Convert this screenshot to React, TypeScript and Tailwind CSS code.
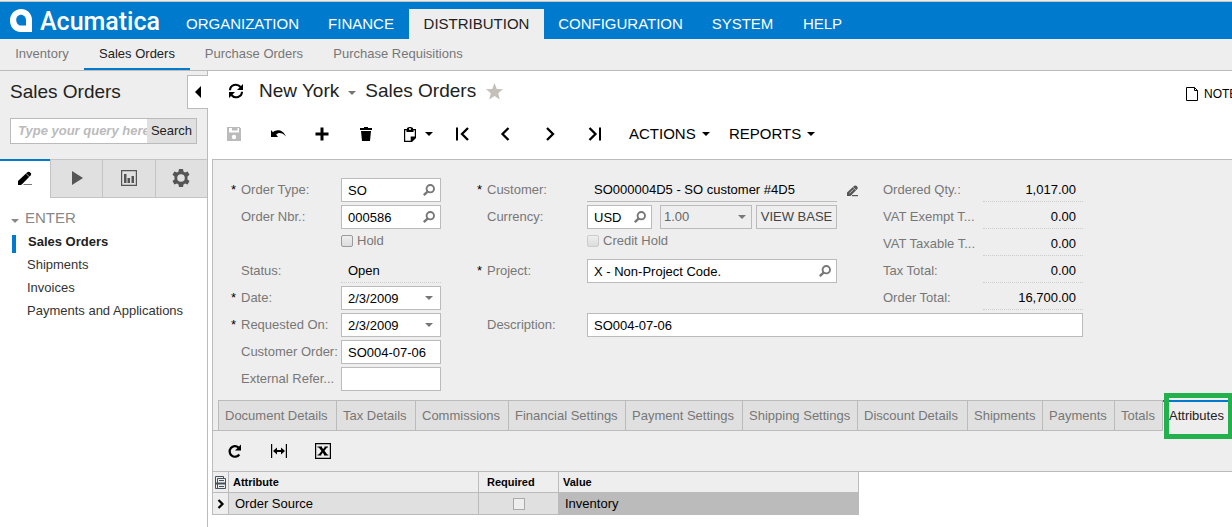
import React from "react";

type IconProps = { className?: string };

const Svg = ({ size = 16, className = "", children }: { size?: number; className?: string; children: React.ReactNode }) => (
  <svg width={size} height={size} viewBox={`0 0 ${size} ${size}`} fill="currentColor" className={`shrink-0 ${className}`} aria-hidden="true">
    {children}
  </svg>
);

const Caret = ({ className = "" }: IconProps) => (
  <svg width="8" height="4" viewBox="0 0 8 4" fill="currentColor" className={`shrink-0 ${className}`} aria-hidden="true">
    <path d="M0 0h8L4 4z" />
  </svg>
);

const Magnifier = () => (
  <svg width="12" height="12" viewBox="0 0 12 12" fill="none" stroke="currentColor" className="shrink-0" aria-hidden="true">
    <circle cx="7.3" cy="4.7" r="3.700" strokeWidth="1.900" />
    <path d="M4.800 7.400.8 11.200" strokeWidth="2.300" />
  </svg>
);

const Pencil = ({ className = "" }: IconProps) => (
  <Svg className={className}>
    <path d="M1 15v-4L10.3 2.2q1.4-1.1 2.7.1l.8.9q.8 1.1-.2 2.3L5 14.2 4 15z" />
    <path d="M9 3.4 12.6 7" stroke="white" strokeWidth=".7" />
    <path d="M7 14.2h8v.9H6z" opacity=".7" />
  </Svg>
);

const Sync = () => (
  <Svg>
    <g fill="none" stroke="currentColor" strokeWidth="2.1">
      <path d="M2 7.2C2.2 1.8 9-.2 12.6 4M14 8.8C13.8 14.2 7 16.2 3.4 12" />
    </g>
    <path d="M15 1v6H9zM1 15V9h6z" />
  </Svg>
);

const navItems = [
  { label: "ORGANIZATION", width: "w-[141px]" },
  { label: "FINANCE", width: "w-24" },
  { label: "DISTRIBUTION", width: "w-[135px]" },
  { label: "CONFIGURATION", width: "w-[153px]" },
  { label: "SYSTEM", width: "w-[91px]" },
  { label: "HELP", width: "w-[69px]" },
];

const subItems = [
  { label: "Inventory", width: "w-[84px]" },
  { label: "Sales Orders", width: "w-[106px]" },
  { label: "Purchase Orders", width: "w-32" },
  { label: "Purchase Requisitions", width: "w-40" },
];

const detailTabs = [
  { label: "Document Details", width: "w-[118px]" },
  { label: "Tax Details", width: "w-[79px]" },
  { label: "Commissions", width: "w-[93px]" },
  { label: "Financial Settings", width: "w-[117px]" },
  { label: "Payment Settings", width: "w-[117px]" },
  { label: "Shipping Settings", width: "w-[115px]" },
  { label: "Discount Details", width: "w-[110px]" },
  { label: "Shipments", width: "w-[75px]" },
  { label: "Payments", width: "w-[72px]" },
  { label: "Totals", width: "w-[49px] border-r" },
];

const totals = [
  ["Ordered Qty.:", "1,017.00"],
  ["VAT Exempt T...", "0.00"],
  ["VAT Taxable T...", "0.00"],
  ["Tax Total:", "0.00"],
  ["Order Total:", "16,700.00"],
];

function Header() {
  return (
    <header className="border-t border-[#eeeeee]">
      <div className="flex h-[38px] items-end border-t border-[#c4c4c4] bg-[#007acc]">
        <div className="flex h-full w-[172px] shrink-0 items-center gap-2 pl-[10px] text-white">
          <svg width="22" height="23" viewBox="0 0 22 23" fill="currentColor" aria-hidden="true" className="shrink-0">
            <path fillRule="evenodd" d="M11 0c6 0 11 4.600 11 10.700V23H10.500C4.500 22.600 0 18 0 11.400 0 5 5 0 11 0zM11 5.800c-2.700 0-4.800 2.300-4.800 5.200s2.100 5.600 4.800 5.600h5V11c0-2.900-2.300-5.200-5-5.200z" />
          </svg>
          <span className="pt-[2px] font-[Roboto,sans-serif] text-[25px] leading-6 font-medium">Acumatica</span>
        </div>
        <nav className="flex items-end text-[15px]">
          {navItems.map(({ label, width }) => (
            <a
              key={label}
              href="#"
              className={`flex h-[30px] items-center justify-center ${width} ${label === "DISTRIBUTION" ? "bg-[#eeeeee] text-[#222222]" : "text-white"}`}
            >
              {label}
            </a>
          ))}
        </nav>
      </div>
      <nav className="flex h-8 border-b border-[#bbbbbb] bg-[#eeeeee]">
        {subItems.map(({ label, width }) => (
          <a
            key={label}
            href="#"
            className={`flex items-center justify-center border-b-2 ${width} ${label === "Sales Orders" ? "border-[#007acc] text-[#222222]" : "border-transparent text-[#777777]"}`}
          >
            {label}
          </a>
        ))}
      </nav>
    </header>
  );
}

function Sidebar() {
  const sideTab = "flex h-[39px] flex-1 items-center justify-center border-t border-b border-l border-[#c4c4c4] bg-[#e0e0e0] pb-[2px] text-[#555555]";
  return (
    <aside className="relative w-52 shrink-0 border-r border-[#bbbbbb] bg-white">
      <div className="h-[88px] bg-[#eeeeee] px-[10px] pt-[9px]">
        <h2 className="text-[19px] leading-6 text-[#222222]">Sales Orders</h2>
        <form className="mt-[14px] flex h-[26px] border border-[#bbbbbb] bg-white">
          <input
            aria-label="Search query"
            placeholder="Type your query here"
            className="min-w-0 flex-1 pl-[7px] font-bold italic outline-none placeholder:text-[#bbbbbb]"
          />
          <button type="button" className="w-[49px] bg-[#e0e0e0] text-[#222222]">Search</button>
        </form>
      </div>
      <button
        type="button"
        aria-label="Collapse panel"
        className="absolute top-1 -right-px flex h-[34px] w-[21px] items-center justify-center border border-r-0 border-[#bbbbbb] bg-white text-black"
      >
        <svg width="6" height="12" viewBox="0 0 6 12" fill="currentColor" aria-hidden="true"><path d="M6 0v12L0 6z" /></svg>
      </button>
      <div className="flex">
        <button type="button" aria-label="Enter" className="flex w-[50px] items-center justify-center border-t-2 border-[#007acc] bg-white pb-1 text-black">
          <Pencil />
        </button>
        <button type="button" aria-label="Run" className={sideTab}>
          <Svg><path d="M3 1v14l11-7z" /></Svg>
        </button>
        <button type="button" aria-label="Reports" className={sideTab}>
          <Svg>
            <path fillRule="evenodd" d="M0 0h16v16H0zM1.200 1.200v13.600h13.600V1.200z" />
            <path d="M3 4h2.500v9H3zM6.500 8h2.500v5H6.500zM10.500 6H13v7h-2.500z" />
          </Svg>
        </button>
        <button type="button" aria-label="Settings" className={sideTab}>
          <Svg size={18}>
            <path fillRule="evenodd" d="M7 0h4l.5 2.600 1.500.8 2.600-1 1.900 3.400-2 1.700v2.900l2 1.700-1.900 3.500-2.600-1-1.500.8L11 18H7l-.5-2.600-1.500-.8-2.600 1-1.900-3.500 2-1.700V7.500l-2-1.700L2.400 2.400l2.600 1 1.500-.8zM9 5.200a3.800 3.800 0 1 0 0 7.600 3.800 3.800 0 0 0 0-7.600z" />
          </Svg>
        </button>
      </div>
      <div className="pt-2">
        <h3 className="flex h-6 items-center gap-[6px] pl-[11px] text-[15px] text-[#888888]">
          <Caret className="mt-[6px]" />
          ENTER
        </h3>
        <ul className="text-[#333333]">
          {["Sales Orders", "Shipments", "Invoices", "Payments and Applications"].map((item, i) => (
            <li key={item} className="flex h-[23px] items-center pl-3">
              <span className={`mr-[11px] h-[18px] w-1 shrink-0 self-end ${i === 0 ? "bg-[#007acc]" : ""}`} />
              <a href="#" className={i === 0 ? "pl-px font-bold text-[#222222]" : "whitespace-nowrap"}>{item}</a>
            </li>
          ))}
        </ul>
      </div>
    </aside>
  );
}

function Toolbar() {
  const tool = "flex h-8 w-11 items-center justify-center";
  return (
    <div className="flex h-[50px] items-center text-black">
      <button type="button" aria-label="Save" className={`${tool} text-[#bbbbbb]`}>
        <Svg><path fillRule="evenodd" d="M1 1h12.500L15 2.500V15H1zM3 2v4.500h10V2h-1.500v2.500H6V2zM8 8.800a2.200 2.200 0 1 0 0 4.400 2.200 2.200 0 0 0 0-4.400z" /></Svg>
      </button>
      <button type="button" aria-label="Undo" className={tool}>
        <Svg><path d="M1 4l2 2.200C6.500 3 13 3.500 16 10.500 12.500 6.500 8.500 6 6.200 8.500L8 11H1z" /></Svg>
      </button>
      <button type="button" aria-label="Add" className={tool}>
        <Svg><path d="M6.500 1.500h3v5h5v3h-5v5h-3v-5h-5v-3h5z" /></Svg>
      </button>
      <button type="button" aria-label="Delete" className={tool}>
        <Svg><path d="M2 2h4V1h4v1h4v2H2zM3 5h10l-1 10H4z" /></Svg>
      </button>
      <button type="button" aria-label="Clipboard" className="flex h-8 w-[52px] items-center gap-2 pl-4">
        <svg width="13" height="15" viewBox="0 0 13 15" fill="currentColor" className="shrink-0" aria-hidden="true">
          <path fillRule="evenodd" d="M0 2h3V1l2-1h2l2 1v1h3v9l-4 4H0zM1.200 3.200v10.600h5.500V9.500h4.100V3.200H9.500V5h-7V3.200zM5 1.300v1.500h2V1.300z" />
        </svg>
        <Caret />
      </button>
      <button type="button" aria-label="First record" className={tool}>
        <Svg><path d="M2 1.500h2v13H2z" /><path d="M14 2 8 8l6 6" fill="none" stroke="currentColor" strokeWidth="2.300" /></Svg>
      </button>
      <button type="button" aria-label="Previous record" className={tool}>
        <Svg><path d="M10.500 2 4.500 8l6 6" fill="none" stroke="currentColor" strokeWidth="2.300" /></Svg>
      </button>
      <button type="button" aria-label="Next record" className={tool}>
        <Svg><path d="M5 2l6 6-6 6" fill="none" stroke="currentColor" strokeWidth="2.300" /></Svg>
      </button>
      <button type="button" aria-label="Last record" className={tool}>
        <Svg><path d="M13 1.500h2v13h-2z" /><path d="M3.500 2l6 6-6 6" fill="none" stroke="currentColor" strokeWidth="2.300" /></Svg>
      </button>
      <button type="button" className="ml-[13px] flex w-[100px] items-center gap-[6px] text-[15px]">ACTIONS <Caret /></button>
      <button type="button" className="flex items-center gap-[6px] text-[15px]">REPORTS <Caret /></button>
    </div>
  );
}

function Row({ id, label, required, children }: { id?: string; label?: string; required?: boolean; children: React.ReactNode }) {
  return (
    <div className="flex h-6 items-center">
      <span className="w-[10px] shrink-0 text-black">{required ? "*" : ""}</span>
      <label htmlFor={id} className="w-[100px] shrink-0 whitespace-nowrap text-[#777777]">{label}</label>
      {children}
    </div>
  );
}

function Field({ id, value, icon, className }: { id: string; value: string; icon?: "search" | "caret"; className: string }) {
  return (
    <div className={`flex h-6 items-center border border-[#bbbbbb] bg-white ${className}`}>
      <input id={id} defaultValue={value} className="h-full min-w-0 flex-1 pl-[6px] text-black outline-none" />
      {icon && (
        <button type="button" aria-label={icon === "search" ? "Look up" : "Open calendar"} className="flex h-full items-center justify-center px-[5px] text-[#777777]">
          {icon === "search" ? <Magnifier /> : <Caret className="mr-[2px]" />}
        </button>
      )}
    </div>
  );
}

const checkbox = "size-3 appearance-none rounded-[2px] border bg-linear-to-b from-[#eeeeee] to-[#dcdcdc]";

function OrderForm() {
  return (
    <form className="flex pt-[18px] pb-[9px] pl-[18px]">
      <div className="flex w-[210px] shrink-0 flex-col gap-[3px]">
        <Row id="type" label="Order Type:" required><Field id="type" value="SO" icon="search" className="w-[100px]" /></Row>
        <Row id="nbr" label="Order Nbr.:"><Field id="nbr" value="000586" icon="search" className="w-[100px]" /></Row>
        <div className="flex h-6 items-start gap-1 pl-[110px] text-[#777777]">
          <input id="hold" type="checkbox" className={`${checkbox} mt-[3px] border-[#999999]`} />
          <label htmlFor="hold" className="leading-[18px]">Hold</label>
        </div>
        <Row label="Status:"><output className="h-6 w-[100px] border-b border-dotted border-[#cccccc] pl-[7px] leading-6 text-black">Open</output></Row>
        <Row id="date" label="Date:" required><Field id="date" value="2/3/2009" icon="caret" className="w-[100px]" /></Row>
        <Row id="requested" label="Requested On:" required><Field id="requested" value="2/3/2009" icon="caret" className="w-[100px]" /></Row>
        <Row id="custorder" label="Customer Order:"><Field id="custorder" value="SO004-07-06" className="w-[100px]" /></Row>
        <Row id="extref" label="External Refer..."><Field id="extref" value="" className="w-[100px]" /></Row>
      </div>
      <div className="ml-9 flex flex-col gap-[3px]">
        <div className="flex">
          <div className="flex w-[396px] flex-col gap-[3px]">
            <Row label="Customer:" required>
              <output className="h-6 w-[250px] border-b border-[#bbbbbb] pl-[7px] leading-6 text-black">SO000004D5 - SO customer #4D5</output>
              <button type="button" aria-label="Edit customer" className="ml-[9px] text-[#555555]">
                <svg width="13" height="13" viewBox="0 0 13 13" fill="currentColor" aria-hidden="true">
                  <path d="M1 12V8.500L8.300 1.800q1.200-.9 2.400.2l.8.9q.7 1-.2 2L4.500 12z" />
                  <path d="M7 3.200 10 6.200M3.500 9.200 7.500 5.500" stroke="#eeeeee" strokeWidth=".7" />
                  <path d="M6 11h6v1.200H6z" />
                </svg>
              </button>
            </Row>
            <Row id="currency" label="Currency:">
              <Field id="currency" value="USD" icon="search" className="w-[65px]" />
              <div className="relative ml-2">
                <select aria-label="Exchange rate" defaultValue="1.00" className="block h-6 w-[92px] appearance-none border border-[#bbbbbb] bg-[#eeeeee] pl-[3px] text-[#666666]">
                  <option>1.00</option>
                </select>
                <Caret className="pointer-events-none absolute top-[10px] right-[6px] text-[#777777]" />
              </div>
              <button type="button" className="ml-1 h-6 w-[81px] border border-[#bbbbbb] whitespace-nowrap text-[#444444]">VIEW BASE</button>
            </Row>
            <div className="flex h-6 items-start gap-1 pl-[110px] text-[#777777]">
              <input id="credit" type="checkbox" className={`${checkbox} mt-[3px] border-[#cccccc]`} />
              <label htmlFor="credit" className="leading-[18px]">Credit Hold</label>
            </div>
            <Row id="project" label="Project:" required><Field id="project" value="X - Non-Project Code." icon="search" className="w-[250px]" /></Row>
          </div>
          <dl className="flex w-[210px] flex-col gap-[3px]">
            {totals.map(([label, value]) => (
              <div key={label} className="flex h-6 items-center pl-[10px]">
                <dt className="w-[100px] shrink-0 whitespace-nowrap text-[#777777]">{label}</dt>
                <dd className="h-6 w-[100px] border-b border-dotted border-[#cccccc] pr-[7px] text-right leading-6 text-black">{value}</dd>
              </div>
            ))}
          </dl>
        </div>
        <Row id="description" label="Description:"><Field id="description" value="SO004-07-06" className="flex-1" /></Row>
      </div>
    </form>
  );
}

function DetailTabs() {
  return (
    <div className="flex h-[31px]">
      <span className="w-[5px] shrink-0 border-b border-[#bbbbbb]" />
      {detailTabs.map(({ label, width }) => (
        <button key={label} type="button" className={`shrink-0 border-t border-b border-l border-[#bbbbbb] bg-[#e0e0e0] pl-[6px] text-left whitespace-nowrap text-[#777777] ${width}`}>
          {label}
        </button>
      ))}
      <button type="button" className="relative min-w-[69px] flex-1 border-t-2 border-[#007acc] pb-[2px] pl-[6px] text-left text-[#222222]">
        Attributes
        <span className="absolute -top-[9px] right-0 left-px h-[46px] border-[5px] border-r-4 border-[#22b14c]" />
      </button>
    </div>
  );
}

function AttributeGrid() {
  const tool = "flex h-8 w-11 items-center justify-center";
  const head = "h-[21px] border-r border-b border-[#bbbbbb] p-0 text-[11px] font-bold";
  const cell = "h-[22px] border-r border-b border-[#bbbbbb] p-0";
  return (
    <>
      <div className="flex h-10 items-center border-l border-[#bbbbbb] bg-[#eeeeee] text-black">
        <button type="button" aria-label="Refresh" className={tool}>
          <Svg><path d="M12.300 11.500A5.300 5.300 0 1 1 11.500 4.500" fill="none" stroke="currentColor" strokeWidth="2.200" /><path d="M14 1.500v6H8z" /></Svg>
        </button>
        <button type="button" aria-label="Fit columns" className={tool}>
          <Svg><path d="M0 1h1.200v14H0zM14.800 1H16v14h-1.200zM2 8l4-3.500V7h4V4.500L14 8l-4 3.500V9H6v2.500z" /></Svg>
        </button>
        <button type="button" aria-label="Export to Excel" className={tool}>
          <Svg><path fillRule="evenodd" d="M0 0h16v16H0zM1.200 1.200v13.600h13.600V1.200z" /><path d="M2.500 3.500h4.500v1l1.200 1.600L9.500 4.500v-1H13v1h-1L9.500 7.800 12.300 11.500h1v1H9v-1L7.800 9.700 6.300 11.500v1H2.500v-1h1.200L6.500 8 3.800 4.500H2.500z" /></Svg>
        </button>
      </div>
      <div className="border-t border-[#bbbbbb]">
        <table className="w-[647px] table-fixed border-separate border-spacing-0 border-l border-[#bbbbbb] text-left text-black">
          <colgroup>
            <col className="w-4" />
            <col className="w-[250px]" />
            <col className="w-20" />
            <col className="w-[300px]" />
          </colgroup>
          <thead className="bg-[#eeeeee]">
            <tr>
              <th className={head} aria-label="Row settings">
                <svg width="11" height="13" viewBox="0 0 11 13" fill="none" stroke="#44525e" className="mx-auto block" aria-hidden="true">
                  <path d="M.5 9V.5h8v2M2.500 12.500v-10h8v10zM.5 6.500v6h2M4 4.500h5M4 10.500h5" />
                  <path d="M1 7.500h9" strokeWidth="2" />
                </svg>
              </th>
              <th className={`${head} pl-1`}>Attribute</th>
              <th className={`${head} pl-2`}>Required</th>
              <th className={`${head} pl-1`}>Value</th>
            </tr>
          </thead>
          <tbody>
            <tr className="bg-[#e0e0e0]">
              <td className={`${cell} bg-[#eeeeee]`}>
                <svg width="8" height="10" viewBox="0 0 8 10" fill="none" stroke="currentColor" strokeWidth="2.200" className="mx-auto block" aria-hidden="true"><path d="M1.500 1l4 4-4 4" /></svg>
              </td>
              <td className={`${cell} pl-[6px]`}>Order Source</td>
              <td className={cell}>
                <input type="checkbox" aria-label="Required" className="mx-auto block size-3 appearance-none border border-[#aaaaaa] bg-[#eeeeee]" />
              </td>
              <td className={`${cell} bg-[#bbbbbb] pl-[6px]`}>Inventory</td>
            </tr>
          </tbody>
        </table>
      </div>
    </>
  );
}

export default function App() {
  return (
    <div className="flex min-h-screen flex-col overflow-hidden bg-white font-['Liberation_Sans',Arial,sans-serif] text-[13px] leading-4">
      <Header />
      <div className="flex flex-1">
        <Sidebar />
        <main className="min-w-0 flex-1 overflow-hidden pl-1">
          <div className="flex h-[38px] items-center pt-[2px] pl-4 text-[19px] text-[#222222]">
            <button type="button" aria-label="Reload" className="mr-[15px] text-black"><Sync /></button>
            <a href="#" className="whitespace-nowrap">New York</a>
            <Caret className="mx-[9px] mt-1 text-[#777777]" />
            <h1 className="whitespace-nowrap">Sales Orders</h1>
            <button type="button" aria-label="Add to favorites" className="ml-[10px] text-[#c4c0b9]">
              <Svg size={17}><path d="M8.500 0l2.300 5.900 6.200.4-4.800 4 1.600 6.200-5.300-3.400-5.300 3.400 1.600-6.200-4.800-4 6.200-.4z" /></Svg>
            </button>
            <button type="button" className="mt-[5px] ml-auto flex w-[46px] items-center gap-[6px] text-xs text-black">
              <svg width="12" height="14" viewBox="0 0 12 14" fill="none" stroke="currentColor" className="shrink-0" aria-hidden="true">
                <path d="M.5.500h8l3 3v10H.5zM8.500.500v3h3" />
              </svg>
              NOTE
            </button>
          </div>
          <Toolbar />
          <section className="border-t border-l border-[#bbbbbb] bg-[#eeeeee]">
            <OrderForm />
            <DetailTabs />
          </section>
          <AttributeGrid />
        </main>
      </div>
    </div>
  );
}
